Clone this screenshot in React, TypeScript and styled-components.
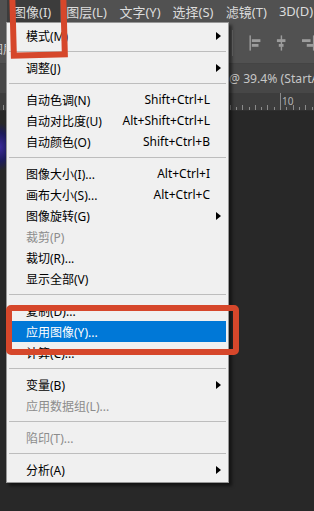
import React from "react";
import styled, { createGlobalStyle } from "styled-components";

const GlobalStyle = createGlobalStyle`
  html, body {
    margin: 0;
    padding: 0;
  }
  body {
    background: #282828;
    font-family: "Noto Sans", "Noto Sans CJK SC", sans-serif;
  }
`;

const Screen = styled.div`
  position: relative;
  width: 314px;
  height: 511px;
  overflow: hidden;
  display: flex;
  flex-direction: column;
  background: #282828;
`;

const MenuBar = styled.div`
  height: 22px;
  display: flex;
  align-items: stretch;
  padding-left: 7px;
  background: #515151;
  overflow: hidden;
`;

const BarItem = styled.div<{ $open?: boolean }>`
  flex: none;
  width: 53.2px;
  box-sizing: border-box;
  display: flex;
  align-items: center;
  padding-left: 6px;
  font-size: 13px;
  color: #dcdcdc;
  background: ${(p) => (p.$open ? "#3c3c3c" : "transparent")};
  white-space: nowrap;
`;

const Toolbar = styled.div`
  height: 41px;
  display: flex;
  align-items: center;
  gap: 14px;
  padding-left: 232px;
  background: #515151;
  border-bottom: 1px solid #444;
`;

const ToolLabel = styled.span`
  position: absolute;
  left: -9px;
  top: 40px;
  font-size: 12px;
  color: #cfcfcf;
`;

const ToolSep = styled.div`
  width: 1px;
  height: 26px;
  background: #6e6e6e;
  margin-right: 2px;
`;

const DocTab = styled.div`
  height: 29px;
  display: flex;
  align-items: center;
  padding-left: 229px;
  background: #474747;
  color: #c6c6c6;
  font-size: 12.2px;
  white-space: nowrap;
  overflow: hidden;
`;

const Ruler = styled.div`
  height: 17px;
  position: relative;
  background: #3d3d3d;
  border-bottom: 1px solid #2e2e2e;
  overflow: hidden;
`;

const Tick = styled.div<{ $h: number }>`
  position: absolute;
  bottom: 0;
  width: 1px;
  height: ${(p) => p.$h}px;
  background: #8a8a8a;
`;

const RulerNum = styled.span`
  position: absolute;
  top: 1px;
  left: 282px;
  font-size: 10px;
  color: #b4b4b4;
`;

const Canvas = styled.div`
  flex: 1;
  background: radial-gradient(ellipse 14px 24px at 0px 36px, #3b2a9a 0%, #1c1b5a 60%, transparent 100%), #282828;
`;

const Menu = styled.div`
  position: absolute;
  left: 6px;
  top: 22px;
  width: 223px;
  box-sizing: border-box;
  padding: 2px;
  background: #f0f0f0;
  border: 1px solid #979797;
  box-shadow: 3px 3px 3px rgba(0, 0, 0, 0.5);
  font-size: 12px;
`;

const Row = styled.div<{ $active?: boolean; $disabled?: boolean }>`
  height: 21px;
  display: flex;
  align-items: center;
  padding-left: 17px;
  background: ${(p) => (p.$active ? "#0078d7" : "transparent")};
  color: ${(p) => (p.$active ? "#ffffff" : p.$disabled ? "#8c8c8c" : "#000000")};
  white-space: nowrap;
`;

const Label = styled.span`
  flex: 1;
`;

const Shortcut = styled.span`
  text-align: right;
`;

const ArrowSlot = styled.span`
  width: 16px;
  display: flex;
  justify-content: flex-end;
  padding-right: 5px;
  box-sizing: border-box;
`;

const Arrow = styled.span`
  width: 0;
  height: 0;
  border-left: 5px solid #000;
  border-top: 4px solid transparent;
  border-bottom: 4px solid transparent;
`;

const Separator = styled.div`
  height: 11px;
  display: flex;
  align-items: center;
  &::after {
    content: "";
    flex: 1;
    height: 1px;
    background: #bdbdbd;
  }
`;

const Mark = styled.div`
  position: absolute;
  border: 6px solid #d6472b;
  box-sizing: border-box;
`;

const TopMark = styled(Mark)`
  left: 10px;
  top: -12px;
  width: 57px;
  height: 70px;
  transform: rotate(-1.5deg);
`;

const ItemMark = styled(Mark)`
  left: 6px;
  top: 305px;
  width: 233px;
  height: 50px;
  border-radius: 5px;
`;

type Item =
  | "sep"
  | { label: string; shortcut?: string; sub?: boolean; disabled?: boolean; active?: boolean };

const items: Item[] = [
  { label: "模式(M)", sub: true },
  "sep",
  { label: "调整(J)", sub: true },
  "sep",
  { label: "自动色调(N)", shortcut: "Shift+Ctrl+L" },
  { label: "自动对比度(U)", shortcut: "Alt+Shift+Ctrl+L" },
  { label: "自动颜色(O)", shortcut: "Shift+Ctrl+B" },
  "sep",
  { label: "图像大小(I)...", shortcut: "Alt+Ctrl+I" },
  { label: "画布大小(S)...", shortcut: "Alt+Ctrl+C" },
  { label: "图像旋转(G)", sub: true },
  { label: "裁剪(P)", disabled: true },
  { label: "裁切(R)..." },
  { label: "显示全部(V)" },
  "sep",
  { label: "复制(D)..." },
  { label: "应用图像(Y)...", active: true },
  { label: "计算(C)..." },
  "sep",
  { label: "变量(B)", sub: true },
  { label: "应用数据组(L)...", disabled: true },
  "sep",
  { label: "陷印(T)...", disabled: true },
  "sep",
  { label: "分析(A)", sub: true },
];

const bar = ["图像(I)", "图层(L)", "文字(Y)", "选择(S)", "滤镜(T)", "3D(D)"];

const AlignIcon = ({ kind }: { kind: "left" | "center" | "right" }) => {
  const lineX = kind === "left" ? 1 : kind === "center" ? 6.5 : 12;
  const bx = kind === "left" ? 3 : kind === "center" ? 2 : 0;
  const sx = kind === "left" ? 3 : kind === "center" ? 4 : 5;
  return (
    <svg width="13" height="16" viewBox="0 0 13 16">
      <rect x={lineX - 0.5} y="0" width="1.5" height="16" fill="#9c9c9c" />
      <rect x={bx} y="4" width="9" height="3" fill="#9c9c9c" />
      <rect x={sx} y="9" width={kind === "center" ? 5 : 7} height="3" fill="#9c9c9c" />
    </svg>
  );
};

const ticks = Array.from({ length: 50 }, (_, i) => i);

export default function App() {
  return (
    <>
      <GlobalStyle />
      <Screen>
        <MenuBar>
          {bar.map((b, i) => (
            <BarItem key={b} $open={i === 0}>
              {b}
            </BarItem>
          ))}
        </MenuBar>
        <Toolbar>
          <ToolSep />
          <AlignIcon kind="left" />
          <AlignIcon kind="center" />
          <AlignIcon kind="right" />
        </Toolbar>
        <ToolLabel>图层</ToolLabel>
        <DocTab>@ 39.4% (StartAndEnd, RGB/8)</DocTab>
        <Ruler>
          {ticks.map((i) => (
            <Tick
              key={i}
              $h={i === 44 ? 17 : i % 2 === 0 ? 5 : 3}
              style={{ left: 280 - (44 - i) * 6.3 }}
            />
          ))}
          <RulerNum>10</RulerNum>
        </Ruler>
        <Canvas />
        <Menu>
          {items.map((it, i) =>
            it === "sep" ? (
              <Separator key={i} />
            ) : (
              <Row key={i} $active={it.active} $disabled={it.disabled}>
                <Label>{it.label}</Label>
                {it.shortcut && <Shortcut>{it.shortcut}</Shortcut>}
                <ArrowSlot>{it.sub && <Arrow />}</ArrowSlot>
              </Row>
            )
          )}
        </Menu>
        <TopMark />
        <ItemMark />
      </Screen>
    </>
  );
}
